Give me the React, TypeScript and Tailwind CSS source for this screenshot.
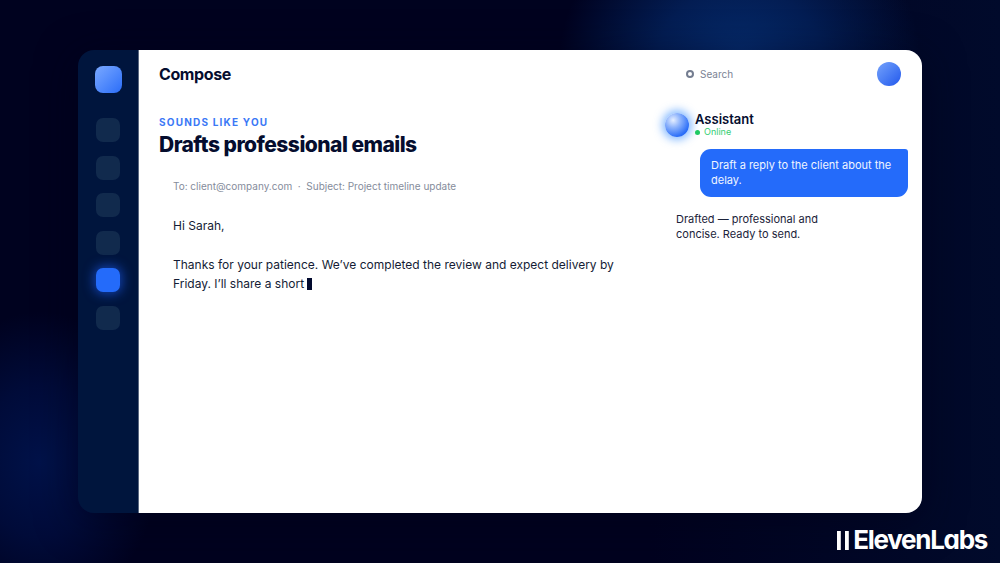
const navItems = ["Home", "Calendar", "Files", "Contacts", "Compose", "Settings"];
const activeItem = "Compose";

function Sidebar() {
  return (
    <aside className="flex w-[61px] shrink-0 flex-col items-center gap-[25px] rounded-l-2xl border-r border-[#5b6880] bg-[#00153d] pt-4">
      <a
        href="#home"
        aria-label="Workspace"
        className="size-[27px] rounded-lg bg-linear-135 from-[#7aa8ff] to-[#2a6cf8]"
      />
      <nav aria-label="Main" className="flex h-[212px] flex-col justify-between">
        {navItems.map((item) => (
          <button
            key={item}
            type="button"
            aria-label={item}
            className={
              item === activeItem
                ? "size-6 rounded-[7px] bg-[#246bfa] shadow-[0_0_11px_2px_rgba(30,95,250,0.6)]"
                : "size-6 rounded-[7px] bg-[#112a4d]"
            }
          />
        ))}
      </nav>
    </aside>
  );
}

function TopBar() {
  return (
    <header className="flex h-12 shrink-0 items-center pr-[21px] pl-5">
      <h1 className="flex-1 text-[16px] font-bold tracking-tight">Compose</h1>
      <label className="flex w-[191px] items-center gap-1.5 text-[#7b8394]">
        <span className="size-2 shrink-0 rounded-full border-2 border-[#747d90]" />
        <input
          type="search"
          aria-label="Search"
          placeholder="Search"
          className="w-full min-w-0 bg-transparent text-[10px] outline-none placeholder:text-[#7b8394] placeholder:opacity-100"
        />
      </label>
      <button
        type="button"
        aria-label="Account"
        className="size-6 rounded-full bg-linear-135 from-[#76a2fb] to-[#2255ec]"
      />
    </header>
  );
}

function Draft() {
  return (
    <main className="min-w-0 flex-1 pt-4 pl-5">
      <p className="text-[10px] leading-4 font-bold tracking-[0.12em] text-[#3b78f6]">
        SOUNDS LIKE YOU
      </p>
      <h2 className="text-[21px] leading-[30px] font-extrabold tracking-tight">
        Drafts professional emails
      </h2>
      <article className="pt-[18px] pr-6 pl-3.5">
        <p className="text-[10px] leading-4 whitespace-pre text-[#858c9b]">
          {"To: client@company.com  ·  Subject: Project timeline update"}
        </p>
        <div className="pt-[22px] text-[12px] leading-[19px] text-[#141c35]">
          <p>Hi Sarah,</p>
          <p className="pt-5">
            Thanks for your patience. We’ve completed the review and expect delivery by Friday. I’ll
            share a short <span className="inline-block h-3 w-[5px] bg-[#020a2e] align-[-2px]" />
          </p>
        </div>
      </article>
    </main>
  );
}

function AssistantPanel() {
  return (
    <section aria-label="Assistant" className="w-[271px] shrink-0 px-3.5 pt-3.5">
      <div className="flex items-center gap-1.5">
        <span className="size-6 rounded-full bg-[radial-gradient(circle_at_34%_30%,#e6efff_0%,#8db3fc_32%,#2c6ff8_72%,#1f5ff0_100%)] shadow-[0_0_9px_3px_rgba(70,150,255,0.65)]" />
        <div>
          <h3 className="text-[13px] leading-[14px] font-semibold">Assistant</h3>
          <p className="flex items-center gap-1 text-[9px] leading-3 text-[#33ce74]">
            <span className="size-[5px] rounded-full bg-[#1fc963]" />
            Online
          </p>
        </div>
      </div>
      <div className="flex flex-col gap-2 pt-[11px] text-[11px] leading-[15px]">
        <p className="w-[208px] self-end rounded-[11px] rounded-tr-[3px] bg-[#246bfa] px-[11px] py-[9px] text-[#f0f5ff]">
          Draft a reply to the client about the delay.
        </p>
        <p className="w-[208px] px-[11px] py-[7px] text-[#1b233a]">
          Drafted — professional and concise. Ready to send.
        </p>
      </div>
    </section>
  );
}

function Brand() {
  return (
    <footer className="flex h-[50px] items-center justify-end gap-1 pt-1 pr-[13px] text-white">
      <svg viewBox="0 0 12 19" className="h-[19px] w-3" fill="currentColor" aria-hidden="true">
        <rect width="3.8" height="19" />
        <rect x="8" width="3.8" height="19" />
      </svg>
      <span className="text-[26px] leading-8 font-bold tracking-tighter [font-feature-settings:'cv11']">
        ElevenLabs
      </span>
    </footer>
  );
}

export default function App() {
  return (
    <div className="flex min-h-screen flex-col bg-[#00021f] bg-[radial-gradient(ellipse_180px_150px_at_74%_10%,#052b6c_0%,#031d53_45%,transparent_100%),radial-gradient(ellipse_120px_150px_at_4%_82%,#001249_0%,#000b39_50%,transparent_100%),linear-gradient(90deg,transparent_65%,#010a2b_100%)] font-['Inter',sans-serif] text-[#050d2e]">
      <div className="flex flex-1 flex-col px-[78px] pt-[50px]">
        <div className="flex flex-1 rounded-2xl shadow-[0_8px_40px_rgba(0,0,24,0.5)]">
          <Sidebar />
          <div className="flex min-w-0 flex-1 flex-col rounded-r-2xl bg-white">
            <TopBar />
            <div className="flex flex-1">
              <Draft />
              <AssistantPanel />
            </div>
          </div>
        </div>
      </div>
      <Brand />
    </div>
  );
}
